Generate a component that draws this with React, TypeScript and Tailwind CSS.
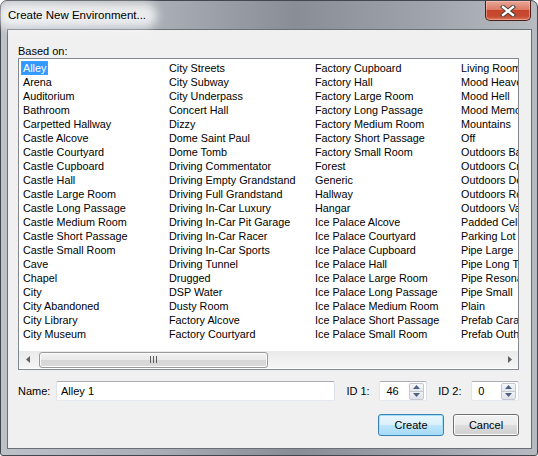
import React from 'react'

const columns: string[][] = [
  [
    'Alley', 'Arena', 'Auditorium', 'Bathroom', 'Carpetted Hallway', 'Castle Alcove',
    'Castle Courtyard', 'Castle Cupboard', 'Castle Hall', 'Castle Large Room',
    'Castle Long Passage', 'Castle Medium Room', 'Castle Short Passage', 'Castle Small Room',
    'Cave', 'Chapel', 'City', 'City Abandoned', 'City Library', 'City Museum',
  ],
  [
    'City Streets', 'City Subway', 'City Underpass', 'Concert Hall', 'Dizzy', 'Dome Saint Paul',
    'Dome Tomb', 'Driving Commentator', 'Driving Empty Grandstand', 'Driving Full Grandstand',
    'Driving In-Car Luxury', 'Driving In-Car Pit Garage', 'Driving In-Car Racer',
    'Driving In-Car Sports', 'Driving Tunnel', 'Drugged', 'DSP Water', 'Dusty Room',
    'Factory Alcove', 'Factory Courtyard',
  ],
  [
    'Factory Cupboard', 'Factory Hall', 'Factory Large Room', 'Factory Long Passage',
    'Factory Medium Room', 'Factory Short Passage', 'Factory Small Room', 'Forest', 'Generic',
    'Hallway', 'Hangar', 'Ice Palace Alcove', 'Ice Palace Courtyard', 'Ice Palace Cupboard',
    'Ice Palace Hall', 'Ice Palace Large Room', 'Ice Palace Long Passage',
    'Ice Palace Medium Room', 'Ice Palace Short Passage', 'Ice Palace Small Room',
  ],
  [
    'Living Room', 'Mood Heaven', 'Mood Hell', 'Mood Memory', 'Mountains', 'Off',
    'Outdoors Backyard', 'Outdoors Creek', 'Outdoors Deep Canyon', 'Outdoors Rolling Plains',
    'Outdoors Valley', 'Padded Cell', 'Parking Lot', 'Pipe Large', 'Pipe Long Thin',
    'Pipe Resonant', 'Pipe Small', 'Plain', 'Prefab Caravan', 'Prefab Outhouse',
  ],
]

function SpinBox({ value }: { value: string }) {
  return (
    <div className="flex h-[20px] w-[48px] items-center justify-between rounded-[2px] border border-[#abadb3] border-b-[#e3e9ef] border-l-[#e2e3ea] border-r-[#dbdfe6] bg-white pl-[6px] pr-[2px]">
      <span>{value}</span>
      <div className="flex h-[17px] w-[15px] flex-col">
        {/* up */}
        <div className="flex h-[9px] items-center justify-center rounded-t-[2px] border border-[#c3c8d0] bg-[linear-gradient(#f7f8fa,#e3e6eb)]">
          <svg width="7" height="4" viewBox="0 0 7 4">
            <path d="M0 4 L3.5 0 L7 4 Z" fill="#4d6185" />
          </svg>
        </div>
        <div className="-mt-px flex h-[9px] items-center justify-center rounded-b-[2px] border border-[#c3c8d0] bg-[linear-gradient(#f1f2f5,#dfe2e8)]">
          <svg width="7" height="4" viewBox="0 0 7 4">
            <path d="M0 0 L7 0 L3.5 4 Z" fill="#4d6185" />
          </svg>
        </div>
      </div>
    </div>
  )
}

export default function App() {
  return (
    <div className="h-[456px] w-[538px] bg-white font-['Liberation_Sans',Arial,sans-serif] text-[11px] text-black">
      <div className="flex h-full flex-col rounded-t-[7px] rounded-b-[3px] border border-[#43474e] bg-[linear-gradient(90deg,#bdc2c8_0%,#a9aeb5_30%,#888d96_55%,#9ea3ab_78%,#b7bbc1_100%)]">
        {/* Title bar */}
        <div className="relative flex h-[28px] items-start justify-between pl-[7px] pr-[6px]">
          <div className="absolute left-[-4px] top-[2px] h-[25px] w-[160px] rounded-full bg-white/75 blur-[5px]" />
          <span className="relative mt-[6px] text-[11.5px] text-black">Create New Environment...</span>
          <div className="relative flex h-[20px] w-[46px] items-center justify-center rounded-b-[5px] border border-t-0 border-[#4a1d16] bg-[linear-gradient(#e9a99a_0%,#dc7a63_45%,#c7442c_50%,#c64a30_80%,#d8785e_100%)] shadow-[inset_0_0_0_1px_rgba(255,200,190,0.5)]">
            <svg width="16" height="12" viewBox="0 0 16 12">
              <path d="M3 2 L13 10 M13 2 L3 10" stroke="#3b3b3b" strokeWidth="4.2" strokeLinecap="square" />
              <path d="M3 2 L13 10 M13 2 L3 10" stroke="#ffffff" strokeWidth="2.4" strokeLinecap="square" />
            </svg>
          </div>
        </div>

        {/* Client area */}
        <div className="ml-[6px] mr-[5px] flex h-[420px] flex-col border border-[#6a6f77] bg-[#f0f0f0] pl-[10px] pr-[12px]">
          <div className="mt-[13px] h-[16px] leading-[16px]">Based on:</div>

          {/* List box */}
          <div className="mt-[-1px] flex h-[312px] flex-col border border-[#828790] bg-white">
            <div className="flex h-[292px] overflow-hidden pl-[2px] pt-[2px] text-[10.8px]">
              {columns.map((col, ci) => (
                <div key={ci} className="flex w-[146px] shrink-0 flex-col">
                  {col.map((item, ri) => (
                    <div key={item} className="h-[14px] leading-[14px]">
                      {ci === 0 && ri === 0 ? (
                        <span className="inline-block h-[14px] bg-[#3399ff] px-[1px] leading-[12px] text-white outline outline-1 -outline-offset-1 outline-dotted outline-[#d8822e]">
                          <span className="inline-block pt-[1px] pl-[1px] pr-[1px]">{item}</span>
                        </span>
                      ) : (
                        <span className="whitespace-nowrap pl-[2px]">{item}</span>
                      )}
                    </div>
                  ))}
                </div>
              ))}
            </div>

            {/* Horizontal scrollbar */}
            <div className="flex h-[17px] bg-[linear-gradient(#eaeaea,#f5f5f5)]">
              <div className="flex w-[17px] items-center justify-center">
                <svg width="4" height="7" viewBox="0 0 4 7">
                  <path d="M4 0 L0 3.5 L4 7 Z" fill="#606060" />
                </svg>
              </div>
              <div className="flex flex-1 items-center pl-[3px]">
                <div className="flex h-[16px] w-[229px] items-center justify-center rounded-[3px] border border-[#9a9a9a] bg-[linear-gradient(#f3f3f3_0%,#e8e8e8_50%,#d6d6d6_51%,#dadada_100%)] shadow-[inset_0_0_0_1px_#fbfbfb]">
                  <svg width="7" height="7" viewBox="0 0 7 7">
                    <path d="M0.5 0 V7 M3.5 0 V7 M6.5 0 V7" stroke="#5a5a5a" strokeWidth="1" />
                  </svg>
                </div>
              </div>
              <div className="flex w-[17px] items-center justify-center">
                <svg width="4" height="7" viewBox="0 0 4 7">
                  <path d="M0 0 L4 3.5 L0 7 Z" fill="#606060" />
                </svg>
              </div>
            </div>
          </div>

          {/* Name / ID row */}
          <div className="mt-[11px] flex h-[20px] items-center">
            <span className="w-[38px] shrink-0">Name:</span>
            <div className="flex h-[20px] w-[281px] items-center rounded-[2px] border border-[#abadb3] border-b-[#e3e9ef] border-l-[#e2e3ea] border-r-[#dbdfe6] bg-white pl-[4px]">
              Alley 1
            </div>
            <span className="ml-[11px] w-[33px] shrink-0">ID 1:</span>
            <SpinBox value="46" />
            <span className="ml-[11px] w-[33px] shrink-0">ID 2:</span>
            <SpinBox value="0" />
          </div>

          {/* Buttons */}
          <div className="mt-[13px] flex justify-end gap-[9px]">
            <button className="flex h-[22px] w-[66px] items-center justify-center rounded-[3px] border border-[#3c7fb1] bg-[linear-gradient(#eaf6fd_0%,#d9f0fc_50%,#bee6fd_51%,#a7d9f5_100%)] shadow-[inset_0_0_0_1px_#9fe0fb]">
              Create
            </button>
            <button className="flex h-[22px] w-[66px] items-center justify-center rounded-[3px] border border-[#707070] bg-[linear-gradient(#f2f2f2_0%,#ebebeb_50%,#dddddd_51%,#cfcfcf_100%)] shadow-[inset_0_0_0_1px_#fcfcfc]">
              Cancel
            </button>
          </div>
        </div>
      </div>
    </div>
  )
}
